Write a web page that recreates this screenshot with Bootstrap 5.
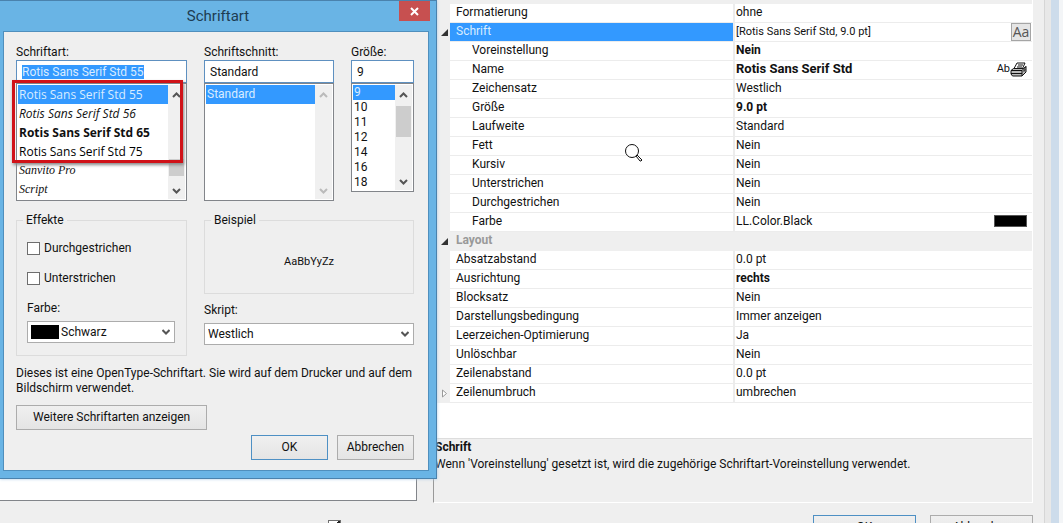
<!DOCTYPE html>
<html lang="de">
<head>
<meta charset="utf-8">
<meta name="viewport" content="width=device-width, initial-scale=1">
<title>Schriftart</title>
<link href="https://cdn.jsdelivr.net/npm/bootstrap@5.3.0/dist/css/bootstrap.min.css" rel="stylesheet">
<style>
:root { --face: #efefef; --hl: #3399ff; --sky: #69b4e5; }
body { font: 12px/15px Roboto, "Open Sans", sans-serif; color: #111; background: var(--face); font-variant-ligatures: none; }
label, legend { font-size: 12px; line-height: 15px; }

/* main window */
.main-area { min-width: 0; padding-right: 3px; }
.left-pane { width: 433px; padding-right: 16px; padding-bottom: 2px; }
.preview-box { background: #fff; border: 1px solid #82858a; border-left: 0; }
.grid-pane { border: 1px solid #fff; border-left-color: #999; border-top: 0; min-width: 0; }
.grid-area { height: 438px; background: #fff; }
.prop-table { width: 100%; table-layout: fixed; margin-top: -15px; border-collapse: separate; border-spacing: 0; }
.prop-table col.gutter { width: 16px; }
.prop-table col.label-col { width: 285px; }
.prop-table td, .prop-table th { height: 19px; padding: 0 1px 2px; line-height: 16px; border-bottom: 1px solid #ececec; font-weight: 400; white-space: nowrap; }
.prop-table th { padding-left: 6px; border-right: 2px solid #ececec; }
.prop-table .child th { padding-left: 22px; }
.prop-table .gut { background: var(--face); padding: 0; border-color: var(--face); line-height: 10px; }
.prop-table .cat th { background: var(--face); color: #999; font-weight: 700; border-color: var(--face); }
.prop-table .sel th { background: var(--hl); color: #d9ecff; }
.prop-table .sel td { padding-bottom: 0; }
.prop-table .strong td { font-weight: 700; }
.prop-table .strong .face-name { font-size: 13px; }
.font-summary { font-size: 11px; }
.gut svg { display: block; margin-left: 7px; }
.aa-btn { width: 20px; height: 18px; padding: 0; border: 1px solid #a5a5a5; background: #e5e5e5; color: #555; font: 500 14px/14px "Open Sans", sans-serif; }
.color-chip { width: 33px; height: 12px; background: #000; border: 1px solid #555; }
.hint-area { height: 64px; border-top: 1px solid #ddd; padding: 1px; }
.hint-title { margin-bottom: 2px; }
.edge-a { width: 7px; background: #e8e8e8; border-left: 1px solid #d6d6d6; }
.edge-b { width: 8px; background: #cddceb; }
.edge-c { width: 4px; background: #f3f5f7; }
.foot { height: 20px; overflow: hidden; }
.foot-check { width: 328px; }
.foot-label { font-size: 11px; }
.foot-option { padding-top: 17px; }
.foot-buttons { gap: 14px; }
.foot-buttons .win-btn { width: 103px; }

/* buttons and fields */
.win-btn { height: 25px; padding: 0; border: 1px solid #acacac; border-radius: 0; color: #111; font-size: 12px; line-height: 15px; background: linear-gradient(#f0f0f0, #e4e4e4); }
.win-btn.default { border-color: #4e90c4; }
.win-check { appearance: none; width: 13px; height: 13px; margin: 0; border: 1px solid #6e6e6e; background: #fff; }
.win-check:checked { background: #fff linear-gradient(135deg, transparent 45%, #222 45%, #222 58%, transparent 58%); }
.win-input { height: 23px; padding: 0 5px; border: 1px solid #5e90c0; border-radius: 0; font-size: 12px; background: #fff; color: #111; outline: 0; }
.win-input::selection { background: var(--hl); color: #d9ecff; }
.win-select { appearance: none; width: 100%; height: 22px; padding: 0 20px 0 3px; border: 1px solid #acacac; border-radius: 0; color: #111; font-size: 12px; background: #fff url("data:image/svg+xml,%3Csvg xmlns='http://www.w3.org/2000/svg' width='8' height='6'%3E%3Cpath d='M.5 1 4 4.500 7.500 1' fill='none' stroke='%23555' stroke-width='2'/%3E%3C/svg%3E") no-repeat right 4px center; }
.win-list { border: 1px solid #82858a; background: #fff; padding: 1px; height: 118px; }
.win-list.short-list { height: 109px; }
.win-list .item { display: block; width: 100%; height: 19px; padding: 0 1px; border: 0; background: none; color: #111; text-align: left; white-space: nowrap; line-height: 19px; font-size: 12px; }
.win-list.short-list .item { height: 15px; line-height: 15px; }
.win-list .item.picked { background: var(--hl); color: #d9ecff; }
.font-items .item { font-family: "Open Sans", sans-serif; }
.font-items .item.display-face { font-family: "Liberation Serif", serif; font-style: italic; }
.font-items .item.medium-face { font-weight: 500; color: #000; }
.sbar { width: 17px; background: #f0f0f0; padding: 7px 0 5px; }
.sthumb { width: 15px; background: #cdcdcd; }

/* font dialog */
.font-dialog { top: 0; left: 0; width: 437px; padding: 0 7px 7px 3px; background: var(--sky); border: solid #4a82ad; border-width: 1px 1px 1px 0; box-shadow: 0 0 3px #a9cbe5; }
.dlg-title { height: 30px; font-size: 15px; line-height: 30px; color: #1d3c52; }
.dlg-close { top: 0; right: 6px; width: 31px; height: 20px; padding: 0; border: 0; background: #c75050; }
.dlg-body { background: var(--face); border: 1px solid #4f8fbd; padding: 13px 14px 10px 12px; height: 440px; }
.col-font { width: 171px; } .col-style { width: 130px; } .col-size { width: 63px; }
.gap-cols { gap: 17px; }
.groups { margin-top: 19px; }
.group { position: relative; border: 1px solid #dcdcdc; padding: 20px 11px 11px 10px; }
.group legend { position: absolute; top: -8px; left: 6px; width: auto; padding: 0 3px; margin: 0; background: var(--face); }
.effects { height: 136px; }
.effects .option { margin-bottom: 15px; }
.sample { height: 74px; font-size: 11px; }
.field-label { margin-bottom: 5px; }
.script-label { margin-top: 9px; }
.swatch { top: 4px; left: 4px; width: 28px; height: 14px; background: #000; pointer-events: none; }
.with-swatch { padding-left: 33px; }
.marker { top: 35px; left: -4px; width: 171px; height: 83px; border: 3px solid #d01218; box-shadow: 1px 2px 3px #888; pointer-events: none; }
.note { margin: 10px 0 9px; }
.dlg-buttons { gap: 9px; margin-top: 5px; }
.dlg-buttons .win-btn { width: 77px; }
.cursor-mark { left: 624px; top: 143px; }
</style>
</head>
<body class="vh-100 overflow-hidden position-relative">
<div class="d-flex h-100">
  <main class="main-area flex-grow-1 d-flex flex-column">
    <div class="d-flex">
      <section class="left-pane flex-shrink-0 d-flex"><div class="preview-box flex-grow-1"></div></section>
      <section class="grid-pane flex-grow-1 me-2">
        <div class="grid-area overflow-hidden">
          <table class="prop-table">
            <colgroup><col class="gutter"><col class="label-col"><col></colgroup>
            <tbody>
              <tr class="cat"><td class="gut"></td><th colspan="2" scope="colgroup">Darstellung</th></tr>
              <tr><td class="gut"></td><th scope="row">Formatierung</th><td>ohne</td></tr>
              <tr class="sel"><td class="gut"><svg width="7" height="7"><path d="M7 0v7H0z" fill="#333"/></svg></td><th scope="row">Schrift</th><td><div class="d-flex justify-content-between align-items-center"><span class="font-summary">[Rotis Sans Serif Std, 9.0 pt]</span><button class="aa-btn" type="button">Aa</button></div></td></tr>
              <tr class="child strong"><td class="gut"></td><th scope="row">Voreinstellung</th><td>Nein</td></tr>
              <tr class="child strong"><td class="gut"></td><th scope="row">Name</th><td><div class="d-flex align-items-center"><span class="face-name me-auto">Rotis Sans Serif Std</span><span class="font-summary fw-normal">Ab</span>
                <svg class="me-1" width="17" height="15" viewBox="0 0 17 15"><path d="M4 6.500 7 1h8l-2.500 5.500" fill="#fff" stroke="#111"/><path d="M8 3h5M7 5h5" stroke="#111"/><path d="M1 8.500l2.500-2h10L16 4.500v5.500l-4 4H2.500L1 12z" fill="#bbb" stroke="#111"/><path d="M1 8.500h11l4-4M12 8.500v5.500M1 11.500h11" stroke="#111" fill="none"/><path d="M13.500 9.500 15.500 7" stroke="#444" stroke-width="1.500"/></svg></div></td></tr>
              <tr class="child"><td class="gut"></td><th scope="row">Zeichensatz</th><td>Westlich</td></tr>
              <tr class="child strong"><td class="gut"></td><th scope="row">Größe</th><td>9.0 pt</td></tr>
              <tr class="child"><td class="gut"></td><th scope="row">Laufweite</th><td>Standard</td></tr>
              <tr class="child"><td class="gut"></td><th scope="row">Fett</th><td>Nein</td></tr>
              <tr class="child"><td class="gut"></td><th scope="row">Kursiv</th><td>Nein</td></tr>
              <tr class="child"><td class="gut"></td><th scope="row">Unterstrichen</th><td>Nein</td></tr>
              <tr class="child"><td class="gut"></td><th scope="row">Durchgestrichen</th><td>Nein</td></tr>
              <tr class="child"><td class="gut"></td><th scope="row">Farbe</th><td><div class="d-flex justify-content-between align-items-center pe-1"><span>LL.Color.Black</span><span class="color-chip"></span></div></td></tr>
              <tr class="cat"><td class="gut"><svg width="7" height="7"><path d="M7 0v7H0z" fill="#333"/></svg></td><th colspan="2" scope="colgroup">Layout</th></tr>
              <tr><td class="gut"></td><th scope="row">Absatzabstand</th><td>0.0 pt</td></tr>
              <tr class="strong"><td class="gut"></td><th scope="row">Ausrichtung</th><td>rechts</td></tr>
              <tr><td class="gut"></td><th scope="row">Blocksatz</th><td>Nein</td></tr>
              <tr><td class="gut"></td><th scope="row">Darstellungsbedingung</th><td>Immer anzeigen</td></tr>
              <tr><td class="gut"></td><th scope="row">Leerzeichen-Optimierung</th><td>Ja</td></tr>
              <tr><td class="gut"></td><th scope="row">Unlöschbar</th><td>Nein</td></tr>
              <tr><td class="gut"></td><th scope="row">Zeilenabstand</th><td>0.0 pt</td></tr>
              <tr><td class="gut"><svg width="7" height="9"><path d="M1.500 1v7l4-3.500z" fill="#fff" stroke="#999"/></svg></td><th scope="row">Zeilenumbruch</th><td>umbrechen</td></tr>
            </tbody>
          </table>
        </div>
        <div class="hint-area"><div class="hint-title fw-bold">Schrift</div><div>Wenn 'Voreinstellung' gesetzt ist, wird die zugehörige Schriftart-Voreinstellung verwendet.</div></div>
      </section>
    </div>
    <div class="foot d-flex">
      <div class="foot-check flex-shrink-0"></div>
      <div class="foot-option d-flex align-items-start me-auto gap-1"><input class="win-check" type="checkbox" id="preview" checked><label class="foot-label" for="preview">VORSCHAU</label></div>
      <div class="foot-buttons d-flex pt-2 mt-1 me-2"><button class="btn win-btn default" type="button">OK</button><button class="btn win-btn" type="button">Abbrechen</button></div>
    </div>
  </main>
  <div class="edge-a flex-shrink-0"></div><div class="edge-b flex-shrink-0"></div><div class="edge-c flex-shrink-0"></div>
</div>

<svg class="cursor-mark position-absolute" width="19" height="19" fill="none" stroke="#111"><circle cx="8" cy="8" r="6.500" fill="#fff"/><path d="m12 13 1-1 5 5-1 1h-1z" fill="#fff"/></svg>

<div class="font-dialog position-absolute" role="dialog" aria-label="Schriftart">
  <div class="dlg-title text-center ps-1">Schriftart</div>
  <button class="dlg-close position-absolute" type="button" aria-label="Schließen"><svg class="d-block mx-auto" width="9" height="9"><path d="m1 1 7 7M8 1 1 8" stroke="#fff" stroke-width="2"/></svg></button>
  <div class="dlg-body d-flex flex-column">
    <div class="d-flex gap-cols">
      <div class="col-font position-relative">
        <label class="d-block" for="face">Schriftart:</label>
        <input class="win-input w-100" id="face" value="Rotis Sans Serif Std 55">
        <div class="win-list d-flex">
          <div class="font-items flex-grow-1">
            <button class="item picked" type="button">Rotis Sans Serif Std 55</button>
            <button class="item fst-italic" type="button">Rotis Sans Serif Std 56</button>
            <button class="item fw-bold" type="button">Rotis Sans Serif Std 65</button>
            <button class="item medium-face" type="button">Rotis Sans Serif Std 75</button>
            <button class="item display-face" type="button">Sanvito Pro</button>
            <button class="item display-face" type="button">Script</button>
          </div>
          <div class="sbar d-flex flex-column align-items-center justify-content-between"><svg width="9" height="6"><path d="m1 5 3.500-3.500L8 5" fill="none" stroke="#555" stroke-width="2"/></svg><div class="sthumb mt-5" style="height:17px"></div><svg width="9" height="6"><path d="m1 1 3.500 3.500L8 1" fill="none" stroke="#555" stroke-width="2"/></svg></div>
        </div>
        <div class="marker position-absolute"></div>
      </div>
      <div class="col-style">
        <label class="d-block" for="cut">Schriftschnitt:</label>
        <input class="win-input w-100" id="cut" value="Standard">
        <div class="win-list d-flex">
          <div class="flex-grow-1"><button class="item picked" type="button">Standard</button></div>
          <div class="sbar d-flex flex-column align-items-center justify-content-between"><svg width="9" height="6"><path d="m1 5 3.500-3.500L8 5" fill="none" stroke="#bbb" stroke-width="2"/></svg><svg width="9" height="6"><path d="m1 1 3.500 3.500L8 1" fill="none" stroke="#bbb" stroke-width="2"/></svg></div>
        </div>
      </div>
      <div class="col-size">
        <label class="d-block" for="size">Größe:</label>
        <input class="win-input w-100" id="size" value="9">
        <div class="win-list short-list d-flex">
          <div class="flex-grow-1">
            <button class="item picked" type="button">9</button><button class="item" type="button">10</button><button class="item" type="button">11</button><button class="item" type="button">12</button><button class="item" type="button">14</button><button class="item" type="button">16</button><button class="item" type="button">18</button>
          </div>
          <div class="sbar d-flex flex-column align-items-center"><svg width="9" height="6"><path d="m1 5 3.500-3.500L8 5" fill="none" stroke="#555" stroke-width="2"/></svg><div class="sthumb mt-2 mb-auto" style="height:31px"></div><svg width="9" height="6"><path d="m1 1 3.500 3.500L8 1" fill="none" stroke="#555" stroke-width="2"/></svg></div>
        </div>
      </div>
    </div>
    <div class="groups d-flex gap-cols">
      <fieldset class="group effects col-font">
        <legend>Effekte</legend>
        <div class="option d-flex align-items-center gap-1"><input class="win-check" type="checkbox" id="strike"><label for="strike">Durchgestrichen</label></div>
        <div class="option d-flex align-items-center gap-1"><input class="win-check" type="checkbox" id="under"><label for="under">Unterstrichen</label></div>
        <label class="field-label d-block" for="ink">Farbe:</label>
        <div class="position-relative"><select class="win-select with-swatch" id="ink"><option>Schwarz</option></select><span class="swatch position-absolute"></span></div>
      </fieldset>
      <div class="flex-grow-1">
        <fieldset class="group sample p-0 d-flex align-items-center justify-content-center"><legend>Beispiel</legend><span class="pt-2">AaBbYyZz</span></fieldset>
        <label class="field-label script-label d-block" for="script">Skript:</label>
        <select class="win-select" id="script"><option>Westlich</option></select>
      </div>
    </div>
    <p class="note">Dieses ist eine OpenType-Schriftart. Sie wird auf dem Drucker und auf dem Bildschirm verwendet.</p>
    <div><button class="btn win-btn px-3" type="button">Weitere Schriftarten anzeigen</button></div>
    <div class="dlg-buttons d-flex justify-content-end"><button class="btn win-btn default" type="button">OK</button><button class="btn win-btn" type="button">Abbrechen</button></div>
  </div>
</div>
<script src="https://cdn.jsdelivr.net/npm/bootstrap@5.3.0/dist/js/bootstrap.bundle.min.js"></script>
<script>document.getElementById('face').select();</script>
</body>
</html>
